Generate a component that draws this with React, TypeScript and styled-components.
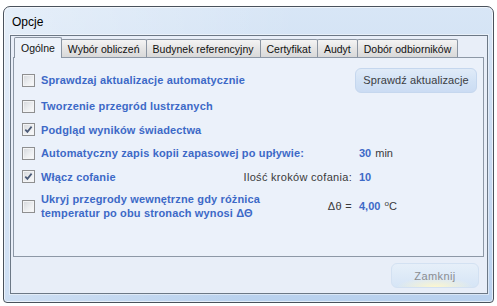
import React from 'react';
import styled, { createGlobalStyle } from 'styled-components';

const GlobalStyle = createGlobalStyle`
  html, body {
    margin: 0;
    padding: 0;
    background: #ffffff;
  }
  body {
    font-family: "Liberation Sans", Arial, sans-serif;
  }
`;

const Window = styled.div`
  box-sizing: border-box;
  margin: 6px 0 0 3px;
  width: 491px;
  height: 297px;
  border: 1px solid #4a525c;
  border-radius: 7px 7px 4px 4px;
  background:
    linear-gradient(100deg, rgba(255, 255, 255, 0.35) 0%, rgba(255, 255, 255, 0) 55%),
    linear-gradient(180deg, #d8e6f6 0%, #cadcf2 45%, #b9d1ee 100%);
  box-shadow: inset 0 0 0 1px rgba(255, 255, 255, 0.6);
  padding: 0 5px 8px 6px;
  display: flex;
  flex-direction: column;
`;

const TitleBar = styled.div`
  height: 28px;
  display: flex;
  align-items: center;
  padding-left: 2px;
  padding-top: 1px;
  box-sizing: border-box;
  font-size: 12px;
  color: #000;
`;

const Client = styled.div`
  box-sizing: border-box;
  height: 259px;
  border: 1px solid #6c7886;
  box-shadow: 0 0 0 1px rgba(255, 255, 255, 0.45);
  background: #e8eef8;
  padding: 1px 3px 0 2px;
  display: flex;
  flex-direction: column;
`;

const TabStrip = styled.div`
  height: 20px;
  display: flex;
  align-items: flex-end;
  padding-left: 2px;
`;

const Tab = styled.div<{ $active?: boolean }>`
  box-sizing: border-box;
  position: relative;
  z-index: ${p => (p.$active ? 1 : 0)};
  height: ${p => (p.$active ? 21 : 18)}px;
  margin-bottom: ${p => (p.$active ? -1 : 0)}px;
  margin-left: -1px;
  padding: 0 6px;
  border: 1px solid #8b95a2;
  border-bottom: none;
  border-radius: 2px 2px 0 0;
  background: ${p =>
    p.$active ? '#ecf2fa' : 'linear-gradient(180deg, #f4f4f4 0%, #e5e5e5 50%, #d9d9d9 100%)'};
  display: flex;
  align-items: center;
  font-size: 10.5px;
  color: #111;
  white-space: nowrap;
`;

const Panel = styled.div`
  box-sizing: border-box;
  height: 200px;
  border: 1px solid #8d98a6;
  background: #ebf1fa;
  padding: 8px 6px 0 8px;
  display: flex;
  flex-direction: column;
`;

const Row = styled.div<{ $h: number }>`
  display: grid;
  grid-template-columns: 13px 1fr 119px;
  column-gap: 6px;
  align-items: center;
  height: ${p => p.$h}px;
`;

const Middle = styled.div`
  display: flex;
  align-items: center;
  justify-content: space-between;
`;

const Label = styled.span`
  font-size: 11px;
  font-weight: bold;
  letter-spacing: 0.15px;
  line-height: 14px;
  color: #3d69c7;
`;

const Side = styled.span`
  font-size: 11px;
  letter-spacing: 0.3px;
  color: #3a3a3a;
`;

const ValueCell = styled.div`
  display: flex;
  align-items: center;
  gap: 4px;
  padding-left: 1px;
`;

const Value = styled.span`
  font-size: 11px;
  font-weight: bold;
  color: #3d69c7;
`;

const Unit = styled.span`
  font-size: 11px;
  color: #3a3a3a;
  sup {
    font-size: 8px;
    vertical-align: 4px;
    line-height: 0;
  }
`;

const Box = styled.span`
  box-sizing: border-box;
  width: 13px;
  height: 13px;
  border: 1px solid #8e8f90;
  background: linear-gradient(135deg, #d4d7db 0%, #eceef0 55%, #fbfbfb 100%);
  box-shadow: inset 0 0 0 1px #f3f4f5;
  display: flex;
  align-items: center;
  justify-content: center;
`;

const SoftButton = styled.button<{ $dim?: boolean }>`
  box-sizing: border-box;
  height: 25px;
  border: 1px solid ${p => (p.$dim ? '#d3e1f2' : '#c5d7ee')};
  border-radius: 6px;
  background: ${p =>
    p.$dim
      ? 'radial-gradient(ellipse 45% 40% at 50% 100%, rgba(255, 248, 205, 0.95), rgba(255, 248, 205, 0) 100%), linear-gradient(180deg, #e6eff9 0%, #d6e5f6 100%)'
      : 'linear-gradient(180deg, #e0ebf8 0%, #d2e2f5 55%, #cbdcf3 100%)'};
  font-family: "Liberation Sans", Arial, sans-serif;
  font-size: 11px;
  letter-spacing: ${p => (p.$dim ? 0.4 : 0.1)}px;
  color: ${p => (p.$dim ? '#8a8d92' : '#3a3d42')};
  padding: 0;
`;

const CheckButton = styled(SoftButton)`
  width: 122px;
  margin-left: -3px;
`;

const Footer = styled.div`
  flex: 1;
  display: flex;
  justify-content: flex-end;
  align-items: flex-start;
  padding: 6px 5px 0 0;
`;

const CloseButton = styled(SoftButton)`
  width: 88px;
`;

const Check = ({ on }: { on?: boolean }) => (
  <Box>
    {on && (
      <svg width="9" height="9" viewBox="0 0 9 9">
        <path d="M1.3 4.6 L3.4 6.9 L7.6 1.6" fill="none" stroke="#4b5b78" strokeWidth="1.7" />
      </svg>
    )}
  </Box>
);

const tabs = ['Ogólne', 'Wybór obliczeń', 'Budynek referencyjny', 'Certyfikat', 'Audyt', 'Dobór odbiorników'];

export default function App() {
  return (
    <>
      <GlobalStyle />
      <Window>
        <TitleBar>Opcje</TitleBar>
        <Client>
          <TabStrip>
            {tabs.map((t, i) => (
              <Tab key={t} $active={i === 0}>
                {t}
              </Tab>
            ))}
          </TabStrip>
          <Panel>
            <Row $h={28}>
              <Check />
              <Middle>
                <Label>Sprawdzaj aktualizacje automatycznie</Label>
              </Middle>
              <CheckButton>Sprawdź aktualizacje</CheckButton>
            </Row>
            <Row $h={24}>
              <Check />
              <Middle>
                <Label>Tworzenie przegród lustrzanych</Label>
              </Middle>
              <span />
            </Row>
            <Row $h={23}>
              <Check on />
              <Middle>
                <Label>Podgląd wyników świadectwa</Label>
              </Middle>
              <span />
            </Row>
            <Row $h={24}>
              <Check />
              <Middle>
                <Label>Automatyczny zapis kopii zapasowej po upływie:</Label>
              </Middle>
              <ValueCell>
                <Value>30</Value>
                <Unit>min</Unit>
              </ValueCell>
            </Row>
            <Row $h={23}>
              <Check on />
              <Middle>
                <Label>Włącz cofanie</Label>
                <Side>Ilość kroków cofania:</Side>
              </Middle>
              <ValueCell>
                <Value>10</Value>
              </ValueCell>
            </Row>
            <Row $h={36}>
              <Check />
              <Middle>
                <Label>
                  Ukryj przegrody wewnętrzne gdy różnica
                  <br />
                  temperatur po obu stronach wynosi ΔΘ
                </Label>
                <Side>Δθ =</Side>
              </Middle>
              <ValueCell>
                <Value>4,00</Value>
                <Unit>
                  <sup>o</sup>C
                </Unit>
              </ValueCell>
            </Row>
          </Panel>
          <Footer>
            <CloseButton $dim>Zamknij</CloseButton>
          </Footer>
        </Client>
      </Window>
    </>
  );
}
